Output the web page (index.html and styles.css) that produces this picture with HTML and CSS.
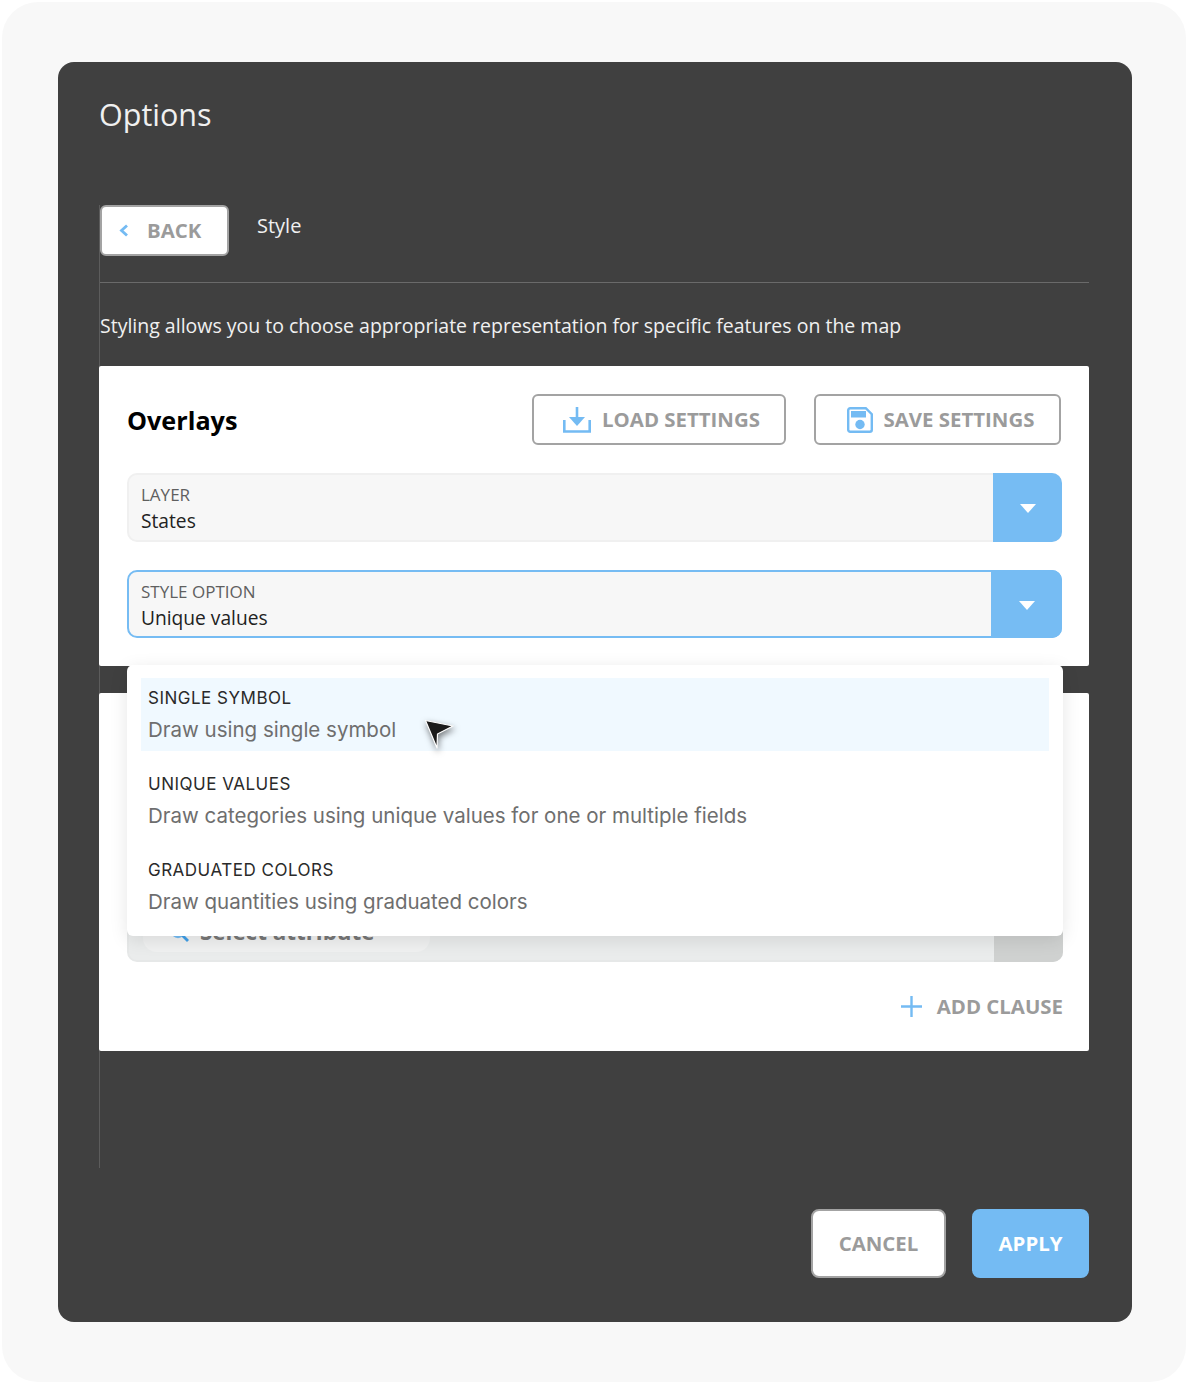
FILE: index.html

```html
<!DOCTYPE html>
<html>
<head>
    <title>Options - Style</title>
    <link rel="stylesheet" href="styles.css">
</head>
<body>
    <div class="frame">
        <div class="modal">
            <h1 class="modal-title">Options</h1>

            <div class="modal-body">
                <div class="crumbs">
                    <button class="btn btn-back">
                        <svg class="back-icon" width="10" height="13" viewBox="0 0 10 13"><path d="M8 1.5 2.5 6.500 8 11.500" fill="none" stroke="#74bbf3" stroke-width="2.8"/></svg>
                        BACK
                    </button>
                    <span class="crumb-label">Style</span>
                </div>

                <p class="intro">Styling allows you to choose appropriate representation for specific features on the map</p>

                <div class="panels">
                    <section class="panel panel-overlays">
                        <div class="panel-head">
                            <h2>Overlays</h2>
                            <button class="btn btn-load">
                                <svg width="28" height="26" viewBox="0 0 28 26"><path d="M1.3 13v11.5h25.4V13" fill="none" stroke="#74bbf3" stroke-width="2.6"/><path d="M14 0v11" stroke="#74bbf3" stroke-width="2.6"/><path d="M6 10h16l-8 9z" fill="#74bbf3"/></svg>
                                LOAD SETTINGS
                            </button>
                            <button class="btn btn-save">
                                <svg width="26" height="26" viewBox="0 0 26 26"><path d="M3.2 1.2h15.6l6 6V22.8a2 2 0 0 1-2 2H3.2a2 2 0 0 1-2-2V3.2a2 2 0 0 1 2-2z" fill="#fff" stroke="#74bbf3" stroke-width="2.4"/><rect x="4" y="4" width="15" height="6.5" fill="#74bbf3"/><circle cx="13" cy="17.500" r="4.700" fill="#74bbf3"/></svg>
                                SAVE SETTINGS
                            </button>
                        </div>

                        <div class="select">
                            <div class="select-text">
                                <span class="select-label">LAYER</span>
                                <span class="select-value">States</span>
                            </div>
                            <div class="select-arrow"><i class="caret"></i></div>
                        </div>

                        <div class="select select-open">
                            <div class="select-text">
                                <span class="select-label">STYLE OPTION</span>
                                <span class="select-value">Unique values</span>
                            </div>
                            <div class="select-arrow"><i class="caret"></i></div>
                        </div>
                    </section>

                    <section class="panel panel-clauses">
                        <div class="clause-box">
                            <div class="chip">
                                <svg width="20" height="20" viewBox="0 0 20 20"><circle cx="8" cy="8" r="6" fill="none" stroke="#74bbf3" stroke-width="2.4"/><path d="M12.5 12.5 18 18" stroke="#3f9fe8" stroke-width="2.8"/></svg>
                                <span>Select attribute</span>
                            </div>
                            <div class="clause-side"></div>
                        </div>
                        <div class="clause-foot">
                            <button class="btn-add">
                                <svg width="21" height="21" viewBox="0 0 21 21"><path d="M10.5 0v21M0 10.5h21" stroke="#74bbf3" stroke-width="2.4"/></svg>
                                ADD CLAUSE
                            </button>
                        </div>
                    </section>

                    <div class="menu">
                        <div class="menu-item menu-item-active">
                            <div class="menu-name">SINGLE SYMBOL</div>
                            <div class="menu-desc">Draw using single symbol</div>
                        </div>
                        <div class="menu-item">
                            <div class="menu-name">UNIQUE VALUES</div>
                            <div class="menu-desc">Draw categories using unique values for one or multiple fields</div>
                        </div>
                        <div class="menu-item">
                            <div class="menu-name">GRADUATED COLORS</div>
                            <div class="menu-desc">Draw quantities using graduated colors</div>
                        </div>
                    </div>

                    <svg class="pointer" width="36" height="36" viewBox="0 0 36 36">
                        <path d="M2.500 1.500 30 7 14.500 15 14 29z" fill="#1b1b1b" stroke="#fff" stroke-width="1.200" stroke-linejoin="round"/>
                    </svg>
                </div>
            </div>

            <div class="modal-foot">
                <button class="btn btn-cancel">CANCEL</button>
                <button class="btn btn-apply">APPLY</button>
            </div>
        </div>
    </div>
</body>
</html>
```

FILE: styles.css

```css
* { box-sizing: border-box; }
html, body { margin: 0; background: #fff; }
body { font-family: "Open Sans", "Noto Sans", sans-serif; padding: 2px; }
h1, h2, p { margin: 0; }
button { font-family: inherit; cursor: pointer; }

.frame { width: 1184px; height: 1380px; padding: 60px 54px 60px 56px; background: #f8f8f8; border-radius: 36px; }
.modal { height: 1260px; background: #404040; border-radius: 16px; padding: 32px 43px 44px 42px; display: flex; flex-direction: column; }
.modal-title { height: 42px; font-size: 30.5px; line-height: 40px; font-weight: 400; color: #f0f0f0; margin-left: -1px; }

.modal-body { height: 963px; margin-top: 69px; margin-left: -1px; border-left: 1px solid #5c5c5c; }
.crumbs { display: flex; gap: 28px; height: 78px; border-bottom: 1px solid #6a6a6a; }
.crumb-label { font-size: 20px; line-height: 42px; color: #f0f0f0; }

.btn { display: flex; align-items: center; justify-content: center; padding: 0 0 2px; font-size: 20.4px; font-weight: 700; color: #9b9b9b; background: #fff; border: 2px solid #a3a3a3; border-radius: 6px; }
.btn svg { margin-top: 2px; }
.btn-back { width: 129px; height: 51px; gap: 18px; padding-left: 17px; justify-content: flex-start; }
.btn .back-icon { margin-top: 1px; }

.intro { margin-top: 29px; height: 54px; font-size: 19.5px; line-height: 27px; color: #f0f0f0; }

.panels { position: relative; margin-left: -1px; }
.panel { background: #fff; border-radius: 2px; }
.panel-overlays { height: 300px; padding: 28px 27px 0 28px; margin-bottom: 27px; }
.panel-head { display: flex; align-items: center; height: 51px; gap: 28px; margin: 0 1px 28px 0; }
.panel-head h2 { flex: 1; font-size: 25.2px; font-weight: 700; color: #000; }
.btn-load { width: 254px; height: 51px; gap: 11px; padding-left: 5px; }
.btn-save { width: 247px; height: 51px; gap: 11px; padding-left: 6px; }

.select { display: flex; height: 69px; margin-bottom: 28px; background: #f7f7f7; border: 2px solid #f0f0f0; border-radius: 10px; }
.select-text { flex: 1; padding: 8px 12px 0; display: flex; flex-direction: column; }
.select-label { font-size: 17px; line-height: 23px; color: #5f5f5f; }
.select-value { font-size: 19.2px; line-height: 30px; color: #222; }
.select-arrow { width: 69px; margin: -2px -2px -2px 0; background: #76bcf3; border-radius: 0 10px 10px 0; display: flex; align-items: center; justify-content: center; }
.select-open { height: 68px; border-color: #76bcf3; }
.select-open .select-arrow { width: 71px; }
.caret { border-left: 8px solid transparent; border-right: 8px solid transparent; border-top: 9px solid #fff; margin-top: 2px; }

.panel-clauses { height: 358px; padding: 0 26px 0 28px; display: flex; flex-direction: column; justify-content: flex-end; }
.clause-box { display: flex; height: 82px; background: #eaecec; border: 2px solid #e6e8e8; border-radius: 10px; padding-left: 14px; }
.chip { width: 287px; height: 70px; display: flex; align-items: flex-end; gap: 10px; padding: 0 0 5px 27px; background: #f0f1f1; border-radius: 0 0 14px 14px; font-size: 22.4px; font-weight: 700; color: #777; }
.chip svg { margin-bottom: 4px; }
.clause-side { width: 69px; margin: -2px -2px -2px auto; background: #cfd1d0; border-radius: 0 10px 10px 0; }
.clause-foot { display: flex; justify-content: flex-end; height: 89px; padding-top: 34px; }
.btn-add { display: flex; align-items: center; gap: 15px; height: 21px; padding: 0 0 2px; background: none; border: 0; font-size: 20.4px; font-weight: 700; color: #9b9b9b; }
.btn-add svg { margin-top: 2px; }

.menu { position: absolute; left: 28px; top: 299px; width: 936px; height: 271px; padding: 13px 14px; background: #fff; border-radius: 6px; box-shadow: 0 4px 18px rgba(0, 0, 0, .1); font-family: Inter, sans-serif; }
.menu-item { height: 73px; margin-bottom: 13px; padding: 8px 7px 0; }
.menu-item-active { background: #f0f9ff; }
.menu-name { font-size: 17px; line-height: 24px; color: #2a2a2a; letter-spacing: .5px; }
.menu-desc { margin-top: 5px; font-size: 20.5px; line-height: 30px; color: #6e6e6e; }
.pointer { position: absolute; left: 324px; top: 353px; filter: drop-shadow(1px 3px 3px rgba(0, 0, 0, .5)); }

.modal-foot { display: flex; justify-content: flex-end; gap: 26px; margin-top: auto; }
.btn-cancel { width: 135px; height: 69px; border-radius: 8px; }
.btn-apply { width: 117px; height: 69px; border-radius: 8px; background: #74bbf3; border-color: #74bbf3; color: #fff; }
```
